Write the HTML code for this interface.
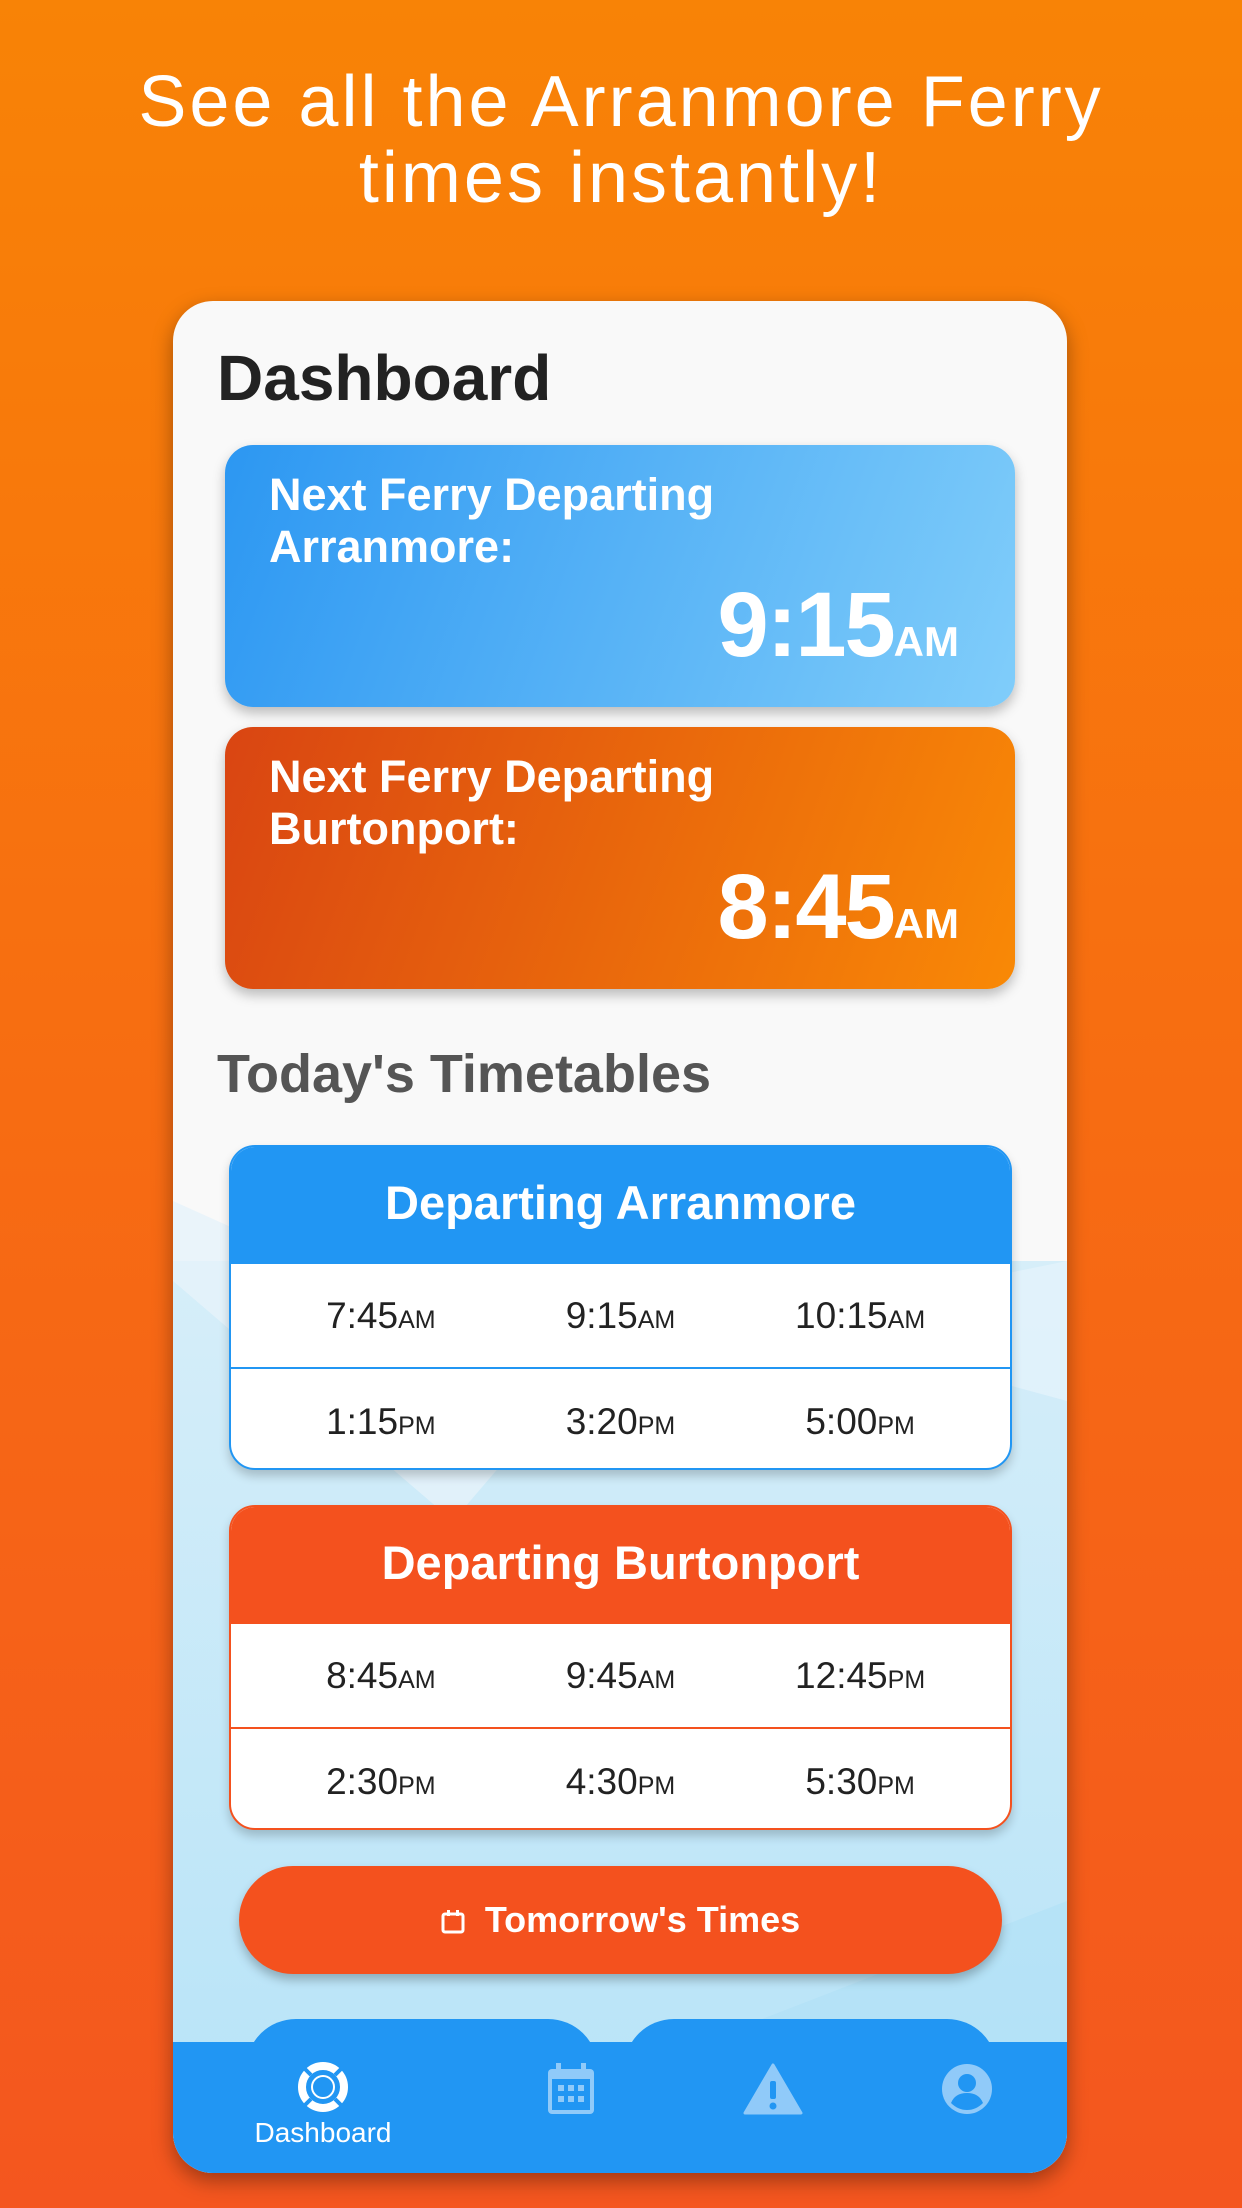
<!DOCTYPE html>
<html><head><meta charset="utf-8"><style>
*{margin:0;padding:0;box-sizing:border-box}
body{width:1242px;height:2208px;overflow:hidden;font-family:"Liberation Sans",sans-serif;background:linear-gradient(180deg,#f88306 0%,#f76c12 50%,#f4561f 100%);position:relative}
.abs{position:absolute}
.head{left:0;width:1242px;text-align:center;color:#fff;font-size:72px;line-height:76px;top:64px;font-weight:300;letter-spacing:3px}
.phone{left:173px;top:301px;width:894px;height:1872px;border-radius:40px;overflow:hidden;background:#f9f9f9;box-shadow:0 8px 20px rgba(0,0,0,.35)}
.bgb{left:0;top:960px;width:894px;height:1000px;background:linear-gradient(180deg,#d6eef9,#b3e2f8)}
.card{left:52px;width:790px;height:262px;border-radius:28px;color:#fff;box-shadow:0 6px 12px rgba(0,0,0,.25)}
.card .t{position:absolute;left:44px;top:24px;font-size:45px;font-weight:bold;line-height:52px;letter-spacing:0}
.card .big{position:absolute;right:56px;top:128px;font-size:92px;font-weight:bold;letter-spacing:-2px}
.card .big span{font-size:42px;letter-spacing:0}
.tt{left:56px;width:783px;height:325px;border-radius:26px;background:#fff;overflow:hidden;box-shadow:0 6px 10px rgba(0,0,0,.2)}
.tt .h{height:117px;color:#fff;font-weight:bold;font-size:47px;text-align:center;line-height:112px}
.row{height:105px;display:flex;align-items:center;font-size:37px;color:#222;padding:0 30px}
.row div{width:33.33%;text-align:center}
.row span{font-size:25px}
</style></head><body>
<div class="abs head">See all the Arranmore Ferry<br>times instantly!</div>
<div class="abs phone">
  <div class="abs bgb"></div>
  <svg class="abs" style="left:0;top:900px" width="894" height="1000"><polygon points="0,0 0,80 280,320 400,180" fill="#e6f3fa" opacity=".8"/><polygon points="894,60 894,200 600,120" fill="#e4f3fb" opacity=".8"/><polygon points="300,930 894,700 894,1000 0,1000" fill="#aedff6" opacity=".5"/></svg>
  <div class="abs" style="left:44px;top:40px;font-size:64px;font-weight:bold;color:#222">Dashboard</div>
  <div class="abs card" style="top:144px;background:linear-gradient(110deg,#2c97f2,#80cdfa)"><div class="t">Next Ferry Departing<br>Arranmore:</div><div class="big">9:15<span>AM</span></div></div>
  <div class="abs card" style="top:426px;background:linear-gradient(110deg,#d94512,#f98906)"><div class="t">Next Ferry Departing<br>Burtonport:</div><div class="big">8:45<span>AM</span></div></div>
  <div class="abs" style="left:44px;top:742px;font-size:54px;font-weight:bold;color:#555">Today's Timetables</div>
  <div class="abs tt" style="top:844px;border:2px solid #2196f3"><div class="h" style="background:#2196f3">Departing Arranmore</div>
    <div class="row" style="border-bottom:2px solid #2196f3"><div>7:45<span>AM</span></div><div>9:15<span>AM</span></div><div>10:15<span>AM</span></div></div>
    <div class="row"><div>1:15<span>PM</span></div><div>3:20<span>PM</span></div><div>5:00<span>PM</span></div></div></div>
  <div class="abs tt" style="top:1204px;border:2px solid #f4511e"><div class="h" style="background:#f4511e">Departing Burtonport</div>
    <div class="row" style="border-bottom:2px solid #f4511e"><div>8:45<span>AM</span></div><div>9:45<span>AM</span></div><div>12:45<span>PM</span></div></div>
    <div class="row"><div>2:30<span>PM</span></div><div>4:30<span>PM</span></div><div>5:30<span>PM</span></div></div></div>
  <div class="abs" style="left:66px;top:1565px;width:763px;height:108px;border-radius:54px;background:#f4511e;color:#fff;font-weight:bold;font-size:36px;text-align:center;line-height:108px;box-shadow:0 6px 10px rgba(0,0,0,.25)">
    <svg width="24" height="26" viewBox="0 0 24 26" style="vertical-align:-3px;margin-right:20px"><rect x="2" y="5" width="20" height="18" rx="2" fill="none" stroke="#fff" stroke-width="3"/><rect x="6" y="1" width="3" height="6" fill="#fff"/><rect x="15" y="1" width="3" height="6" fill="#fff"/></svg>Tomorrow's Times</div>
  <div class="abs" style="left:73px;top:1718px;width:352px;height:60px;border-radius:50px 50px 0 0;background:#2196f3"></div>
  <div class="abs" style="left:451px;top:1718px;width:373px;height:60px;border-radius:50px 50px 0 0;background:#2196f3"></div>
  <div class="abs" style="left:0;top:1741px;width:894px;height:131px;background:#2196f3"></div>
  <svg class="abs" style="left:124px;top:1760px" width="52" height="52" viewBox="0 0 52 52"><circle cx="26" cy="26" r="21" fill="none" stroke="#fff" stroke-width="8"/><circle cx="26" cy="26" r="11" fill="none" stroke="#fff" stroke-width="2"/><g stroke="#2196f3" stroke-width="4"><line x1="14" y1="14" x2="7" y2="7"/><line x1="38" y1="14" x2="45" y2="7"/><line x1="14" y1="38" x2="7" y2="45"/><line x1="38" y1="38" x2="45" y2="45"/></g></svg>
  <div class="abs" style="left:50px;top:1816px;width:200px;text-align:center;color:#fff;font-size:28px">Dashboard</div>
  <svg class="abs" style="left:374px;top:1762px" width="48" height="52" viewBox="0 0 48 52"><rect x="1" y="6" width="46" height="45" rx="4" fill="#90caf9"/><rect x="9" y="0" width="5" height="10" fill="#90caf9"/><rect x="34" y="0" width="5" height="10" fill="#90caf9"/><rect x="5" y="16" width="38" height="31" fill="#2196f3"/><g fill="#90caf9"><rect x="11" y="22" width="6" height="6"/><rect x="21" y="22" width="6" height="6"/><rect x="31" y="22" width="6" height="6"/><rect x="11" y="33" width="6" height="6"/><rect x="21" y="33" width="6" height="6"/><rect x="31" y="33" width="6" height="6"/></g></svg>
  <svg class="abs" style="left:570px;top:1762px" width="60" height="52" viewBox="0 0 60 52"><path d="M30 2 L58 50 L2 50 Z" fill="#90caf9" stroke="#90caf9" stroke-width="3" stroke-linejoin="round"/><rect x="27" y="18" width="6" height="18" rx="2" fill="#2196f3"/><circle cx="30" cy="43" r="3.5" fill="#2196f3"/></svg>
  <svg class="abs" style="left:768px;top:1762px" width="52" height="52" viewBox="0 0 52 52"><circle cx="26" cy="26" r="25" fill="#90caf9"/><circle cx="26" cy="20" r="9" fill="#2196f3"/><path d="M10 40 Q14 30 26 30 Q38 30 42 40 Q35 47 26 47 Q17 47 10 40Z" fill="#2196f3"/></svg>
</div>
</body></html>
